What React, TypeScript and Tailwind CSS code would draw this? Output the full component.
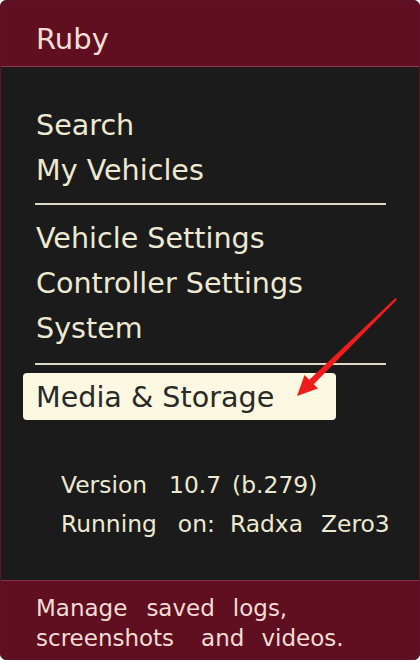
const font = { fontFamily: '"DejaVu Sans", "Liberation Sans", sans-serif' };

const menuTop = ['Search', 'My Vehicles'];
const menuMid = ['Vehicle Settings', 'Controller Settings', 'System'];

const Word = ({ text, gap = 0 }: { text: string; gap?: number }) => (
  <span className="inline-block whitespace-pre" style={{ marginLeft: gap }}>
    {text}
  </span>
);

export default function App() {
  return (
    <div
      className="relative flex h-[660px] w-[420px] flex-col overflow-hidden rounded-[6px] border border-[#5a1427] bg-[#1b1b1b]"
      style={font}
    >
      {/* title bar */}
      <div className="h-[66px] shrink-0 border-b border-[#8d3a50] bg-[#5f0f20] pl-[35px] pt-[22px] text-[29px] leading-[32px] text-[#f4ddd6]">
        Ruby
      </div>

      {/* menu */}
      <div className="flex-1 pt-[36px] text-[28.6px] leading-[45px] text-[#ede9d2]">
        <div className="pl-[35px]">
          {menuTop.map((m) => (
            <div key={m}>{m}</div>
          ))}
        </div>
        <div className="ml-[34px] mt-[10px] h-[2px] w-[351px] bg-[#ddd8c2]" />
        <div className="mt-[11px] pl-[35px]">
          {menuMid.map((m) => (
            <div key={m}>{m}</div>
          ))}
        </div>
        <div className="ml-[34px] mt-[12px] h-[2px] w-[351px] bg-[#ddd8c2]" />
        <div className="ml-[22px] mt-[8px] h-[47px] w-[313px] rounded-[4px] bg-[#fdf8e2] pl-[13px] pt-[2px] text-[#2a2a26]">
          Media &amp; Storage
        </div>

        <div className="mt-[46px] pl-[60px] text-[23.4px] leading-[39px] text-[#ede9d2]">
          <div className="flex">
            <Word text="Version" />
            <Word text="10.7" gap={22} />
            <Word text="(b.279)" gap={11} />
          </div>
          <div className="flex">
            <Word text="Running" />
            <Word text="on:" gap={21} />
            <Word text="Radxa" gap={15} />
            <Word text="Zero3" gap={18} />
          </div>
        </div>
      </div>

      {/* description */}
      <div className="h-[79px] shrink-0 border-t border-[#8a3048] bg-[#5f0f20] pl-[35px] pt-[12px] text-[23px] leading-[30px] text-[#f2dcd6]">
        <div className="flex">
          <Word text="Manage" />
          <Word text="saved" gap={19} />
          <Word text="logs," gap={18} />
        </div>
        <div className="flex">
          <Word text="screenshots" />
          <Word text="and" gap={27} />
          <Word text="videos." gap={17} />
        </div>
      </div>

      {/* annotation arrow */}
      <svg className="pointer-events-none absolute left-0 top-0" width="420" height="660">
        <polygon points="394.5,297 396,298.5 312.5,383.5 308,379" fill="#ee1c1c" />
        <polygon points="296,395 303.5,374 317,387.5" fill="#ee1c1c" />
      </svg>
    </div>
  );
}
